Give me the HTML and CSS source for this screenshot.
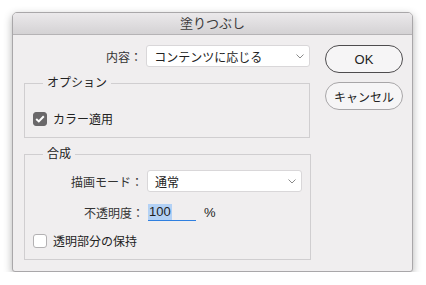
FILE: index.html
```html
<!DOCTYPE html>
<html lang="ja">
<head>
    <meta charset="UTF-8">
    <meta name="viewport" content="width=device-width, initial-scale=1.0">
    <title>塗りつぶし</title>
    <link rel="stylesheet" href="styles.css">
</head>
<body>

<div class="window">
    <div class="titlebar">塗りつぶし</div>

    <div class="content">
        <div class="main">
            <div class="row top-row">
                <span class="label">内容：</span>
                <div class="select wide">
                    <span>コンテンツに応じる</span>
                    <svg width="8" height="5" viewBox="0 0 8 5"><path d="M0.5 0.5 L4 4 L7.5 0.5" fill="none" stroke="#8a8a8a" stroke-width="1"/></svg>
                </div>
            </div>

            <fieldset class="group options">
                <legend>オプション</legend>
                <div class="check-row">
                    <span class="checkbox checked">
                        <svg width="10" height="8" viewBox="0 0 10 8"><path d="M1.2 4 L3.8 6.4 L8.8 1.2" fill="none" stroke="#fff" stroke-width="2"/></svg>
                    </span>
                    <span>カラー適用</span>
                </div>
            </fieldset>

            <fieldset class="group blend">
                <legend>合成</legend>
                <div class="row mode-row">
                    <span class="label">描画モード：</span>
                    <div class="select narrow">
                        <span>通常</span>
                        <svg width="8" height="5" viewBox="0 0 8 5"><path d="M0.5 0.5 L4 4 L7.5 0.5" fill="none" stroke="#8a8a8a" stroke-width="1"/></svg>
                    </div>
                </div>
                <div class="row opacity-row">
                    <span class="label">不透明度：</span>
                    <div class="num-input"><span class="selected">100</span></div>
                    <span class="unit">%</span>
                </div>
                <div class="check-row keep">
                    <span class="checkbox"></span>
                    <span>透明部分の保持</span>
                </div>
            </fieldset>
        </div>

        <div class="buttons">
            <div class="btn primary">OK</div>
            <div class="btn">キャンセル</div>
        </div>
    </div>
</div>

</body>
</html>
```

FILE: styles.css
```css
body { margin: 0; padding: 12px 0 0 12px; background: #fff; font-family: "Liberation Sans", "Noto Sans CJK JP", sans-serif; font-size: 12px; color: #222; }

/* Dialog window */
.window { width: 399px; height: 258px; background: #f0eeef; border: 1px solid #a9a7a9; border-radius: 5px 5px 3px 3px; box-shadow: 0 3px 9px rgba(0, 0, 0, 0.3); overflow: hidden; }
.titlebar { height: 21px; line-height: 21px; text-align: center; font-size: 13px; color: #3a3a3a; background: linear-gradient(#ebe9eb, #d4d2d4); border-bottom: 1px solid #b5b3b5; }

.content { display: flex; padding: 10px 0 0 11px; gap: 15px; }
.main { width: 286px; }

/* Rows with label + control */
.row { display: flex; align-items: center; }
.label { width: 119px; text-align: right; margin-right: 4px; color: #333; }
.select { height: 20px; background: #fff; border: 1px solid #d9d7d9; border-radius: 3px; display: flex; align-items: center; justify-content: space-between; padding: 0 5px 0 7px; box-sizing: content-box; }
.select.wide { width: 151px; }
.select.narrow { width: 141px; }
.mode-row .label { width: 118px; }

/* Groups */
.group { margin: 8px 0 0; padding: 0 8px 10px; border: 1px solid #d0ced0; }
.group legend { margin-left: 10px; padding: 0 4px; line-height: 16px; color: #222; }
.options { margin-top: 8px; }
.options .check-row { margin-top: 19px; }
.blend { margin-top: 8px; }
.blend .mode-row { margin-top: 8px; margin-left: -8px; }
.opacity-row { margin-top: 11px; margin-left: -8px; }
.keep { margin-top: 11px; }

.check-row { display: flex; align-items: center; gap: 6px; }
.checkbox { width: 14px; height: 14px; box-sizing: border-box; border: 1px solid #b3b1b3; border-radius: 3px; background: #fff; display: flex; align-items: center; justify-content: center; }
.checkbox.checked { background: #6a686a; border-color: #6a686a; }

.num-input { width: 48px; height: 17px; border-bottom: 1px solid #2f7fe0; display: flex; align-items: center; font-size: 13px; margin-left: 0; }
.selected { background: #b3d1f5; padding: 0 1px; line-height: 16px; }
.unit { margin-left: 8px; font-size: 13px; }

/* Buttons */
.buttons { display: flex; flex-direction: column; gap: 9px; }
.btn { width: 76px; height: 26px; border: 1px solid #a8a6a8; border-radius: 14px; background: #f6f5f6; display: flex; align-items: center; justify-content: center; color: #222; }
.btn.primary { border-color: #4e4c4e; font-size: 13px; }
```
